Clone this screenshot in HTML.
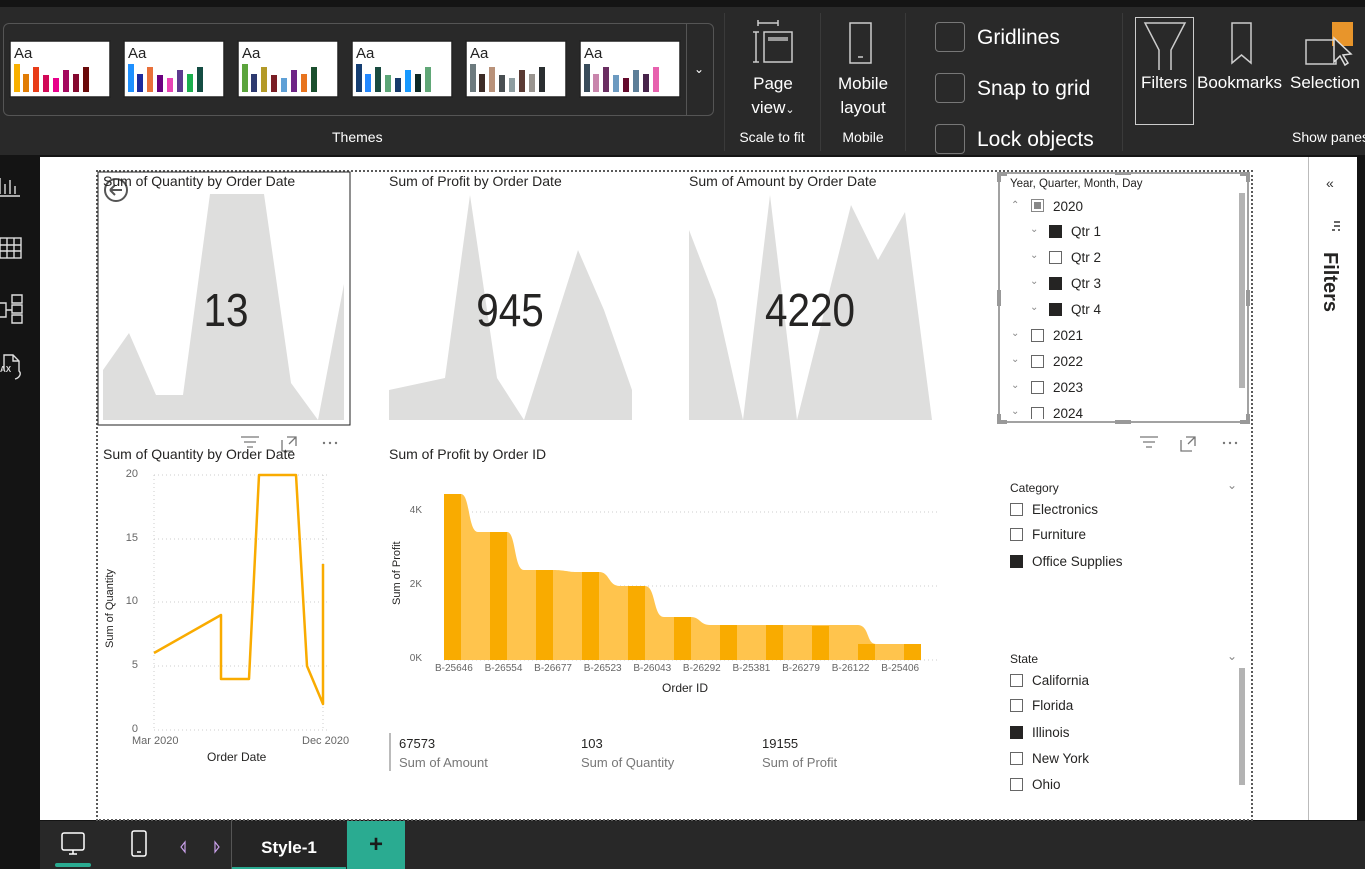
<!DOCTYPE html>
<html><head><meta charset="utf-8">
<style>
*{margin:0;padding:0;box-sizing:border-box}
body{width:1365px;height:869px;overflow:hidden;background:#141414;font-family:"Liberation Sans",sans-serif;position:relative}
.a{position:absolute}
.rib{left:0;top:7px;width:1365px;height:148px;background:#292929}
.w{color:#fff;white-space:nowrap}
.t{color:#252423;font-size:13.5px;white-space:nowrap}
.cb{position:absolute;width:13px;height:13px;border:1px solid #666;background:#fff}
.cb.f{background:#252423;border-color:#252423}
.lbl{font-size:13.5px;color:#252423;position:absolute;white-space:nowrap}
.chev{position:absolute;font-size:10px;color:#888}
.big{position:absolute;text-align:center;font-size:46px;color:#252423;font-family:"Liberation Sans",sans-serif;transform:scaleX(0.88)}
</style></head><body>
<div class="a rib"></div>
<!-- Themes group -->
<div class="a" style="left:3px;top:23px;width:711px;height:93px;border:1px solid #555;border-radius:6px"></div>
<div class="a" style="left:686px;top:24px;width:1px;height:91px;background:#555"></div>
<div class="a w" style="left:694px;top:62px;font-size:12px">⌄</div>
<div class="a w" style="left:332px;top:129px;font-size:14px">Themes</div>
<svg class="a" style="left:0;top:38px" width="690" height="62">
<g font-family="Liberation Sans" font-size="15" fill="#222">
<g transform="translate(10,1)"><rect x="0" y="2" width="100" height="56" fill="#fff" stroke="#222" stroke-width="1.5"/><text x="4" y="19">Aa</text>
<rect x="4" y="25" width="6" height="28" fill="#F9B000"/><rect x="13" y="35" width="6" height="18" fill="#E17C05"/><rect x="23" y="28" width="6" height="25" fill="#E83C18"/><rect x="33" y="36" width="6" height="17" fill="#D10857"/><rect x="43" y="39" width="6" height="14" fill="#E8008B"/><rect x="53" y="31" width="6" height="22" fill="#A4075E"/><rect x="63" y="35" width="6" height="18" fill="#85082F"/><rect x="73" y="28" width="6" height="25" fill="#6A0A0A"/></g>
<g transform="translate(124,1)"><rect x="0" y="2" width="100" height="56" fill="#fff" stroke="#222" stroke-width="1.5"/><text x="4" y="19">Aa</text>
<rect x="4" y="25" width="6" height="28" fill="#1E90FF"/><rect x="13" y="35" width="6" height="18" fill="#1C2A9E"/><rect x="23" y="28" width="6" height="25" fill="#E8703A"/><rect x="33" y="36" width="6" height="17" fill="#6B0080"/><rect x="43" y="39" width="6" height="14" fill="#E843B5"/><rect x="53" y="31" width="6" height="22" fill="#5D3A8E"/><rect x="63" y="35" width="6" height="18" fill="#1BAF4E"/><rect x="73" y="28" width="6" height="25" fill="#144D43"/></g>
<g transform="translate(238,1)"><rect x="0" y="2" width="100" height="56" fill="#fff" stroke="#222" stroke-width="1.5"/><text x="4" y="19">Aa</text>
<rect x="4" y="25" width="6" height="28" fill="#5BA43C"/><rect x="13" y="35" width="6" height="18" fill="#2E3A70"/><rect x="23" y="28" width="6" height="25" fill="#B39A28"/><rect x="33" y="36" width="6" height="17" fill="#7A1E25"/><rect x="43" y="39" width="6" height="14" fill="#5FA0D6"/><rect x="53" y="31" width="6" height="22" fill="#6E2585"/><rect x="63" y="35" width="6" height="18" fill="#E8741E"/><rect x="73" y="28" width="6" height="25" fill="#1B4F2E"/></g>
<g transform="translate(352,1)"><rect x="0" y="2" width="100" height="56" fill="#fff" stroke="#222" stroke-width="1.5"/><text x="4" y="19">Aa</text>
<rect x="4" y="25" width="6" height="28" fill="#153E72"/><rect x="13" y="35" width="6" height="18" fill="#2288FF"/><rect x="23" y="28" width="6" height="25" fill="#194B40"/><rect x="33" y="36" width="6" height="17" fill="#5BA677"/><rect x="43" y="39" width="6" height="14" fill="#163A6B"/><rect x="53" y="31" width="6" height="22" fill="#1799FF"/><rect x="63" y="35" width="6" height="18" fill="#0E2A25"/><rect x="73" y="28" width="6" height="25" fill="#60A777"/></g>
<g transform="translate(466,1)"><rect x="0" y="2" width="100" height="56" fill="#fff" stroke="#222" stroke-width="1.5"/><text x="4" y="19">Aa</text>
<rect x="4" y="25" width="6" height="28" fill="#6C7A7E"/><rect x="13" y="35" width="6" height="18" fill="#3C2B26"/><rect x="23" y="28" width="6" height="25" fill="#B9927A"/><rect x="33" y="36" width="6" height="17" fill="#484E51"/><rect x="43" y="39" width="6" height="14" fill="#8E9DA0"/><rect x="53" y="31" width="6" height="22" fill="#5A3A33"/><rect x="63" y="35" width="6" height="18" fill="#9A9590"/><rect x="73" y="28" width="6" height="25" fill="#2A2E30"/></g>
<g transform="translate(580,1)"><rect x="0" y="2" width="100" height="56" fill="#fff" stroke="#222" stroke-width="1.5"/><text x="4" y="19">Aa</text>
<rect x="4" y="25" width="6" height="28" fill="#384B5A"/><rect x="13" y="35" width="6" height="18" fill="#C985AC"/><rect x="23" y="28" width="6" height="25" fill="#6A2E61"/><rect x="33" y="36" width="6" height="17" fill="#6C9AC0"/><rect x="43" y="39" width="6" height="14" fill="#640A2C"/><rect x="53" y="31" width="6" height="22" fill="#5C7E98"/><rect x="63" y="35" width="6" height="18" fill="#47234A"/><rect x="73" y="28" width="6" height="25" fill="#E761AE"/></g>
</g></svg>
<!-- separators -->
<div class="a" style="left:724px;top:13px;width:1px;height:138px;background:#3a3a3a"></div>
<div class="a" style="left:820px;top:13px;width:1px;height:138px;background:#3a3a3a"></div>
<div class="a" style="left:905px;top:13px;width:1px;height:138px;background:#3a3a3a"></div>
<div class="a" style="left:1122px;top:13px;width:1px;height:138px;background:#3a3a3a"></div>
<!-- page view icon -->
<svg class="a" style="left:750px;top:20px" width="50" height="46" fill="none" stroke="#ccc" stroke-width="1.5">
<path d="M8 3h20M8 0v6M28 0v6M6 12v30M3 12h6M3 42h6M14 12h28v30H14z"/><rect x="18" y="17" width="20" height="4" fill="#999" stroke="none"/></svg>
<div class="a w" style="left:728px;top:72px;width:90px;text-align:center;font-size:17px;line-height:24px">Page<br>view<span style="font-size:11px">⌄</span></div>
<div class="a w" style="left:726px;top:129px;width:92px;text-align:center;font-size:14px">Scale to fit</div>
<svg class="a" style="left:844px;top:20px" width="40" height="46" fill="none" stroke="#ccc" stroke-width="1.5"><rect x="6" y="3" width="21" height="40"/><path d="M14 37h5"/></svg>
<div class="a w" style="left:822px;top:72px;width:82px;text-align:center;font-size:17px;line-height:24px">Mobile<br>layout</div>
<div class="a w" style="left:822px;top:129px;width:82px;text-align:center;font-size:14px">Mobile</div>
<!-- checkboxes -->
<div class="a" style="left:935px;top:22px;width:30px;height:30px;border:1.5px solid #777;border-radius:4px"></div>
<div class="a" style="left:935px;top:73px;width:30px;height:30px;border:1.5px solid #777;border-radius:4px"></div>
<div class="a" style="left:935px;top:124px;width:30px;height:30px;border:1.5px solid #777;border-radius:4px"></div>
<div class="a w" style="left:977px;top:26px;font-size:21px">Gridlines</div>
<div class="a w" style="left:977px;top:77px;font-size:21px">Snap to grid</div>
<div class="a w" style="left:977px;top:128px;font-size:21px">Lock objects</div>
<!-- Filters/bookmarks/selection -->
<div class="a" style="left:1135px;top:17px;width:59px;height:108px;border:1px solid #ccc"></div>
<svg class="a" style="left:1140px;top:20px" width="225" height="50" fill="none" stroke="#ccc" stroke-width="1.5">
<path d="M5 3h40L31 30v21h-12V30z"/>
<path d="M92 3h19v40l-9.5-8-9.5 8z"/>
<rect x="192" y="2" width="21" height="24" fill="#E8952B" stroke="none"/>
<rect x="166" y="20" width="30" height="24"/>
<path d="M194 18l0 24 6-6 5 9 3-2-5-8 8-1z" fill="#292929" stroke="#ddd"/></svg>
<div class="a w" style="left:1141px;top:73px;font-size:17px">Filters</div>
<div class="a w" style="left:1197px;top:73px;font-size:17px">Bookmarks</div>
<div class="a w" style="left:1290px;top:73px;font-size:17px">Selection</div>
<div class="a w" style="left:1292px;top:129px;font-size:14px">Show panes</div>

<!-- left sidebar -->
<div class="a" style="left:0;top:155px;width:40px;height:714px;background:#141414"></div>
<svg class="a" style="left:0;top:170px" width="30" height="215" fill="none" stroke="#ddd" stroke-width="1.4">
<path d="M0 8v16M5 14v10M10 10v14M15 16v8M0 26h20"/><rect x="0" y="68" width="21" height="20"/><path d="M0 75h21M0 81h21M7 68v20M14 68v20"/>
<path d="M0 133h6v14h-6M6 140h6M12 125h10v8h-10zM12 135h10v8h-10zM12 145h10v8h-10z"/>
<path d="M4 199v-14h9l6 6v10c3 3 0 7-4 8M13 185v6h6"/></svg>
<div class="a" style="left:0;top:365px;font-size:8px;color:#ddd;font-weight:bold">AX</div>

<!-- canvas -->
<div class="a" style="left:40px;top:157px;width:1268px;height:663px;background:#fff"></div>
<div class="a" style="left:1308px;top:157px;width:1px;height:663px;background:#bbb"></div>
<div class="a" style="left:1309px;top:157px;width:48px;height:663px;background:#fff"></div>
<div class="a" style="left:1326px;top:175px;font-size:14px;color:#333">«</div>
<svg class="a" style="left:1330px;top:220px" width="12" height="14" stroke="#333" stroke-width="1.5"><path d="M4 2h6M4 6h6M8 10h2M2 2v0"/><path d="M2 10h3"/></svg>
<div class="a" style="left:1318px;top:252px;font-size:20px;font-weight:bold;color:#252423;writing-mode:vertical-rl">Filters</div>

<!-- selection dotted -->
<div class="a" style="left:96px;top:170px;width:1157px;height:651px;border:2px dotted #5a5a5a"></div>

<!-- cards sparkline -->
<svg class="a" style="left:0;top:0" width="1365" height="869">
<rect x="98" y="172" width="252" height="253" fill="#fff" stroke="#222" stroke-width="1"/>
<polygon fill="#DEDEDD" points="103,370 129,333 156,395 183,395 210,194 264,194 291,383 318,420 344,284 344,420 103,420"/>
<polygon fill="#DEDEDD" points="389,390 445,378 470,195 497,378 524,420 578,250 604,310 632,390 632,420 389,420"/>
<polygon fill="#DEDEDD" points="689,230 716,300 743,420 770,195 797,420 851,205 878,260 905,212 932,420 689,420"/>
<circle cx="116" cy="190" r="11" fill="none" stroke="#555" stroke-width="2"/><path d="M110 190h12M110 190l5-5M110 190l5 5" stroke="#555" stroke-width="2" fill="none"/>
<g stroke="#ccc" stroke-dasharray="1,3" stroke-width="1">
<path d="M154 475H330M154 539H330M154 602H330M154 666H330M154 730H330M154 475V730M323 475V730"/>
<path d="M444 512H940M444 586H940M444 660H940"/>
</g>
<polyline fill="none" stroke="#F9AB00" stroke-width="2.5" stroke-linejoin="round" points="154,653 221,615 221,679 249,679 259,475 296,475 307,666 323,704 323,564"/>
<path fill="#FFC44D" d="M444 494H461C470 494,468 532,478 532H507C516 532,514 570,524 570H553C565 570,568 572,576 572H599C610 572,608 586,620 586H645C656 586,653 617,664 617H691C700 617,700 625,710 625H858C870 626,866 644,876 644H921V660H444Z"/>
<g fill="#F9AB00">
<rect x="444" y="494" width="17" height="166"/><rect x="490" y="532" width="17" height="128"/><rect x="536" y="570" width="17" height="90"/><rect x="582" y="572" width="17" height="88"/><rect x="628" y="586" width="17" height="74"/><rect x="674" y="617" width="17" height="43"/><rect x="720" y="625" width="17" height="35"/><rect x="766" y="625" width="17" height="35"/><rect x="812" y="626" width="17" height="34"/><rect x="858" y="644" width="17" height="16"/><rect x="904" y="644" width="17" height="16"/>
</g>
<g stroke="#777" fill="none" stroke-width="1.3">
<path d="M241 437h18M244 442h12M247 447h6"/><path d="M282 440v11h11M287 437h9v9M296 437l-7 7"/>
<path d="M1140 437h18M1143 442h12M1146 447h6"/><path d="M1181 440v11h11M1186 437h9v9M1195 437l-7 7"/>
</g>
<g fill="#777"><circle cx="324" cy="443" r="1.2"/><circle cx="330" cy="443" r="1.2"/><circle cx="336" cy="443" r="1.2"/><circle cx="1224" cy="443" r="1.2"/><circle cx="1230" cy="443" r="1.2"/><circle cx="1236" cy="443" r="1.2"/></g>
<rect x="999" y="173" width="249" height="249" fill="none" stroke="#444" stroke-width="1"/>
<g fill="#999"><rect x="997" y="172" width="10" height="4"/><rect x="997" y="172" width="4" height="10"/><rect x="1240" y="172" width="10" height="4"/><rect x="1246" y="172" width="4" height="10"/><rect x="997" y="420" width="10" height="4"/><rect x="997" y="414" width="4" height="10"/><rect x="1240" y="420" width="10" height="4"/><rect x="1246" y="414" width="4" height="10"/><rect x="1115" y="172" width="16" height="3"/><rect x="1115" y="420" width="16" height="4"/><rect x="997" y="290" width="4" height="16"/><rect x="1246" y="290" width="4" height="16"/></g>
<rect x="1239" y="193" width="6" height="195" fill="#b3b3b3"/>
<rect x="1239" y="668" width="6" height="117" fill="#b3b3b3"/>
<rect x="389" y="733" width="2" height="38" fill="#bbb"/>
</svg>

<div class="a t" style="left:103px;top:173px;font-size:14px">Sum of Quantity by Order Date</div>
<div class="a t" style="left:389px;top:173px;font-size:14px">Sum of Profit by Order Date</div>
<div class="a t" style="left:689px;top:173px;font-size:14px">Sum of Amount by Order Date</div>
<div class="big" style="left:176px;top:283px;width:100px">13</div>
<div class="big" style="left:450px;top:283px;width:120px">945</div>
<div class="big" style="left:745px;top:283px;width:130px">4220</div>

<div class="a t" style="left:103px;top:446px;font-size:14px">Sum of Quantity by Order Date</div>
<div class="a t" style="left:389px;top:446px;font-size:14px">Sum of Profit by Order ID</div>
<div class="a" style="left:120px;top:468px;font-size:11px;color:#666;width:18px;text-align:right">20</div>
<div class="a" style="left:120px;top:532px;font-size:11px;color:#666;width:18px;text-align:right">15</div>
<div class="a" style="left:120px;top:595px;font-size:11px;color:#666;width:18px;text-align:right">10</div>
<div class="a" style="left:120px;top:659px;font-size:11px;color:#666;width:18px;text-align:right">5</div>
<div class="a" style="left:120px;top:723px;font-size:11px;color:#666;width:18px;text-align:right">0</div>
<div class="a" style="left:132px;top:735px;font-size:11px;color:#666">Mar 2020</div>
<div class="a" style="left:302px;top:735px;font-size:11px;color:#666">Dec 2020</div>
<div class="a" style="left:207px;top:750px;font-size:12px;color:#252423">Order Date</div>
<div class="a" style="left:104px;top:648px;font-size:11px;color:#252423;transform:rotate(-90deg);transform-origin:0 0;white-space:nowrap">Sum of Quantity</div>
<div class="a" style="left:400px;top:505px;font-size:10px;color:#666;width:22px;text-align:right">4K</div>
<div class="a" style="left:400px;top:579px;font-size:10px;color:#666;width:22px;text-align:right">2K</div>
<div class="a" style="left:400px;top:653px;font-size:10px;color:#666;width:22px;text-align:right">0K</div>
<div class="a" style="left:391px;top:605px;font-size:11px;color:#252423;transform:rotate(-90deg);transform-origin:0 0;white-space:nowrap">Sum of Profit</div>
<div class="a" style="left:435px;top:663px;font-size:10px;color:#666;word-spacing:9px;white-space:nowrap">B-25646 B-26554 B-26677 B-26523 B-26043 B-26292 B-25381 B-26279 B-26122 B-25406</div>
<div class="a" style="left:662px;top:681px;font-size:12px;color:#252423">Order ID</div>
<div class="a" style="left:399px;top:736px;font-size:13px;color:#252423">67573</div>
<div class="a" style="left:399px;top:755px;font-size:13px;color:#777">Sum of Amount</div>
<div class="a" style="left:581px;top:736px;font-size:13px;color:#252423">103</div>
<div class="a" style="left:581px;top:755px;font-size:13px;color:#777">Sum of Quantity</div>
<div class="a" style="left:762px;top:736px;font-size:13px;color:#252423">19155</div>
<div class="a" style="left:762px;top:755px;font-size:13px;color:#777">Sum of Profit</div>

<div class="a" style="left:1010px;top:178px;font-size:11.5px;color:#252423">Year, Quarter, Month, Day</div>
<div class="chev" style="left:1011px;top:200px">⌃</div>
<div class="cb" style="left:1031px;top:199px;border-color:#888"><div style="margin:2px;width:7px;height:7px;background:#888"></div></div>
<div class="lbl" style="left:1053px;top:199px">2020</div>
<div class="chev" style="left:1030px;top:224px">⌄</div><div class="cb f" style="left:1049px;top:225px"></div><div class="lbl" style="left:1071px;top:224px">Qtr 1</div>
<div class="chev" style="left:1030px;top:250px">⌄</div><div class="cb" style="left:1049px;top:251px"></div><div class="lbl" style="left:1071px;top:250px">Qtr 2</div>
<div class="chev" style="left:1030px;top:276px">⌄</div><div class="cb f" style="left:1049px;top:277px"></div><div class="lbl" style="left:1071px;top:276px">Qtr 3</div>
<div class="chev" style="left:1030px;top:302px">⌄</div><div class="cb f" style="left:1049px;top:303px"></div><div class="lbl" style="left:1071px;top:302px">Qtr 4</div>
<div class="chev" style="left:1011px;top:328px">⌄</div><div class="cb" style="left:1031px;top:329px"></div><div class="lbl" style="left:1053px;top:328px">2021</div>
<div class="chev" style="left:1011px;top:354px">⌄</div><div class="cb" style="left:1031px;top:355px"></div><div class="lbl" style="left:1053px;top:354px">2022</div>
<div class="chev" style="left:1011px;top:380px">⌄</div><div class="cb" style="left:1031px;top:381px"></div><div class="lbl" style="left:1053px;top:380px">2023</div>
<div class="chev" style="left:1011px;top:406px">⌄</div><div class="cb" style="left:1031px;top:407px;height:12px;border-bottom:none"></div><div class="lbl" style="left:1053px;top:406px;height:15px;overflow:hidden">2024</div>

<div class="a" style="left:1010px;top:481px;font-size:12px;color:#252423">Category</div>
<div class="chev" style="left:1227px;top:478px;font-size:12px">⌄</div>
<div class="cb" style="left:1010px;top:503px"></div><div class="lbl" style="left:1032px;top:502px">Electronics</div>
<div class="cb" style="left:1010px;top:528px"></div><div class="lbl" style="left:1032px;top:527px">Furniture</div>
<div class="cb f" style="left:1010px;top:555px"></div><div class="lbl" style="left:1032px;top:554px">Office Supplies</div>
<div class="a" style="left:1010px;top:652px;font-size:12px;color:#252423">State</div>
<div class="chev" style="left:1227px;top:649px;font-size:12px">⌄</div>
<div class="cb" style="left:1010px;top:674px"></div><div class="lbl" style="left:1032px;top:673px">California</div>
<div class="cb" style="left:1010px;top:699px"></div><div class="lbl" style="left:1032px;top:698px">Florida</div>
<div class="cb f" style="left:1010px;top:726px"></div><div class="lbl" style="left:1032px;top:725px">Illinois</div>
<div class="cb" style="left:1010px;top:752px"></div><div class="lbl" style="left:1032px;top:751px">New York</div>
<div class="cb" style="left:1010px;top:778px"></div><div class="lbl" style="left:1032px;top:777px">Ohio</div>

<div class="a" style="left:40px;top:821px;width:1325px;height:48px;background:#282828"></div>
<svg class="a" style="left:55px;top:828px" width="180" height="40" fill="none" stroke="#fff" stroke-width="1.5">
<rect x="7" y="5" width="22" height="17" rx="2"/><path d="M14 26h8M18 22v4"/>
<rect x="77" y="3" width="14" height="25" rx="2"/><path d="M82 24h4"/>
<path d="M130 14l-4 5 4 5z" stroke="#c8a0e8" stroke-width="1.2"/><path d="M160 14l4 5-4 5z" stroke="#c8a0e8" stroke-width="1.2"/></svg>
<div class="a" style="left:55px;top:863px;width:36px;height:4px;border-radius:2px;background:#2aab91"></div>
<div class="a" style="left:231px;top:821px;width:1px;height:48px;background:#555"></div>
<div class="a" style="left:232px;top:821px;width:114px;height:48px;background:#252525;border-bottom:2px solid #2aab91"></div>
<div class="a w" style="left:232px;top:838px;width:114px;text-align:center;font-size:17px;font-weight:bold">Style-1</div>
<div class="a" style="left:347px;top:821px;width:58px;height:48px;background:#2aab91"></div>
<div class="a" style="left:347px;top:831px;width:58px;text-align:center;font-size:24px;font-weight:bold;color:#1a1a1a">+</div>
</body></html>
